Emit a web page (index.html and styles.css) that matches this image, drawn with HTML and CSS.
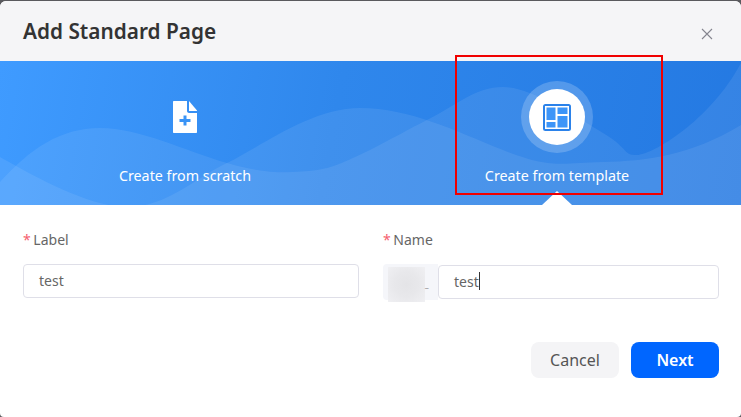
FILE: index.html
```html
<!DOCTYPE html>
<html lang="en">

<head>
  <meta charset="UTF-8">
  <meta name="viewport" content="width=device-width, initial-scale=1.0">
  <title>Add Standard Page</title>
  <link rel="stylesheet" href="styles.css">
</head>

<body>

  <div class="dialog">

    <div class="header">
      <p class="title">Add Standard Page</p>
      <svg class="close" width="12" height="12" viewBox="0 0 12 12">
        <path d="M1 1L11 11M11 1L1 11" stroke="#85858f" stroke-width="1.1" fill="none"/>
      </svg>
    </div>

    <div class="banner">
      <svg class="waves" width="741" height="144" viewBox="0 0 741 144">
        <path d="M0 121C30 88 60 67 100 67S185 90 227 102S290 112 317 109S395 75 427 59S475 26 503 26S575 55 603 72S622 94 637 94S710 60 741 2V144H0Z" fill="#fff" fill-opacity="0.08"/>
        <path d="M0 96C25 110 90 148 130 146S195 117 227 102S310 47 360 47S455 70 503 89S560 102 603 101S690 95 741 64V144H0Z" fill="#fff" fill-opacity="0.08"/>
      </svg>

      <div class="option">
        <div class="option-icon">
          <svg width="24" height="32" viewBox="0 0 24 32">
            <path d="M1 0H14V10C14 11 15 12 16 12H24V31C24 31.600 23.600 32 23 32H1C.4 32 0 31.600 0 31V1C0 .4 .4 0 1 0Z" fill="#fff"/>
            <path d="M16 0L24 9.500V10H16Z" fill="#fff"/>
            <path d="M12 14.500V24.500M6.500 19.500H17.500" stroke="#3a94f6" stroke-width="3" fill="none"/>
          </svg>
        </div>
        <p class="option-label">Create from scratch</p>
      </div>

      <div class="option option-active">
        <div class="option-icon">
          <div class="ring">
            <div class="circle">
              <svg width="28" height="27" viewBox="0 0 28 27">
                <rect x="0" y="0" width="28" height="27" rx="2.500" fill="#2b82ea"/>
                <rect x="2" y="2" width="24" height="23" fill="#fff"/>
                <rect x="3.500" y="3.500" width="9" height="12.500" fill="#3d95f8"/>
                <rect x="14.500" y="3.500" width="10" height="6.500" fill="#3d95f8"/>
                <rect x="3.500" y="18" width="9" height="5.500" fill="#3d95f8"/>
                <rect x="14.500" y="12" width="10" height="11.500" fill="#3d95f8"/>
              </svg>
            </div>
          </div>
        </div>
        <p class="option-label">Create from template</p>
        <span class="arrow"></span>
      </div>

      <div class="highlight"></div>
    </div>

    <div class="form">
      <div class="field">
        <label class="field-label"><span class="required">*</span> Label</label>
        <div class="input">test</div>
      </div>
      <div class="field">
        <label class="field-label"><span class="required">*</span> Name</label>
        <div class="name-row">
          <div class="prefix">
            <span class="prefix-blur"></span>
            <span class="prefix-text">_</span>
          </div>
          <div class="input input-name">test<span class="caret"></span></div>
        </div>
      </div>
    </div>

    <div class="footer">
      <button class="btn btn-cancel">Cancel</button>
      <button class="btn btn-next">Next</button>
    </div>

  </div>

</body>

</html>
```

FILE: styles.css
```css
* {
  box-sizing: border-box;
}

html,
body {
  margin: 0;
  height: 417px;
  overflow: hidden;
  background-color: #5a5a5e;
}

body {
  padding-top: 1px;
  font-family: "Noto Sans", "Open Sans", sans-serif;
}

p {
  margin: 0;
}

.dialog {
  height: 416px;
  background-color: #fff;
  border-radius: 6px 6px 4px 4px;
  overflow: hidden;
}

.header {
  height: 60px;
  padding: 0 28px 1px 23px;
  display: flex;
  align-items: center;
  justify-content: space-between;
  background-color: #f5f5f7;
}

.title {
  font-size: 20.8px;
  font-weight: 600;
  color: #333;
}

.close {
  margin-top: 6px;
}

.banner {
  position: relative;
  height: 144px;
  display: flex;
  background: linear-gradient(100deg, #3f9bff 0%, #2f87ec 45%, #2479e2 100%);
}

.waves {
  position: absolute;
  left: 0;
  top: 0;
}

.option {
  position: relative;
  flex: 0 0 370px;
  display: flex;
  flex-direction: column;
  align-items: center;
}

.option-active {
  flex: 0 0 371px;
  padding-left: 3px;
}

.option-icon {
  height: 72px;
  margin-top: 20px;
  display: flex;
  align-items: center;
  justify-content: center;
}

.ring {
  width: 72px;
  height: 72px;
  padding: 8px;
  border-radius: 50%;
  background-color: rgba(255, 255, 255, 0.2);
}

.circle {
  width: 56px;
  height: 56px;
  border-radius: 50%;
  background-color: #fff;
  display: flex;
  align-items: center;
  justify-content: center;
}

.option-label {
  margin-top: 11px;
  font-size: 14.3px;
  line-height: 24px;
  color: #fff;
}

.arrow {
  position: absolute;
  left: 172px;
  bottom: 0;
  border-left: 15px solid transparent;
  border-right: 15px solid transparent;
  border-bottom: 14px solid #fff;
}

.highlight {
  position: absolute;
  left: 455px;
  top: -6px;
  width: 208px;
  height: 140px;
  border: 2px solid #f00000;
}

.form {
  padding: 24px 22px 0 23px;
  display: flex;
  gap: 24px;
}

.field {
  flex: 1;
}

.field-label {
  display: block;
  font-size: 14px;
  line-height: 22px;
  color: #666;
}

.required {
  margin-right: -1px;
  color: #f5606d;
}

.input {
  height: 34px;
  margin-top: 13px;
  padding: 0 15px 2px;
  display: flex;
  align-items: center;
  font-size: 14px;
  color: #666;
  background-color: #fff;
  border: 1px solid #dfdfe8;
  border-radius: 4px;
}

.name-row {
  display: flex;
  margin-top: 13px;
}

.prefix {
  position: relative;
  flex: 0 0 55px;
  height: 36px;
  background-color: #f5f6fa;
  border-radius: 4px 0 0 4px;
}

.prefix-blur {
  position: absolute;
  left: 5px;
  top: 3px;
  width: 37px;
  height: 35px;
  background: radial-gradient(circle, #e4e4e7 0%, #e8e8eb 50%, #f0f0f3 100%);
}

.prefix-text {
  position: absolute;
  left: 42px;
  top: 14px;
  font-size: 8px;
  color: #888;
}

.input-name {
  flex: 1;
  margin-top: 1px;
}

.caret {
  width: 1px;
  height: 18px;
  background-color: #333;
}

.footer {
  padding: 42px 22px 0 0;
  display: flex;
  justify-content: flex-end;
  gap: 12px;
}

.btn {
  width: 88px;
  height: 36px;
  padding: 0;
  border: none;
  border-radius: 8px;
  font-family: inherit;
  font-size: 16px;
}

.btn-cancel {
  color: #555;
  background-color: #f4f4f6;
}

.btn-next {
  color: #fff;
  font-weight: 600;
  background-color: #0066ff;
}
```
